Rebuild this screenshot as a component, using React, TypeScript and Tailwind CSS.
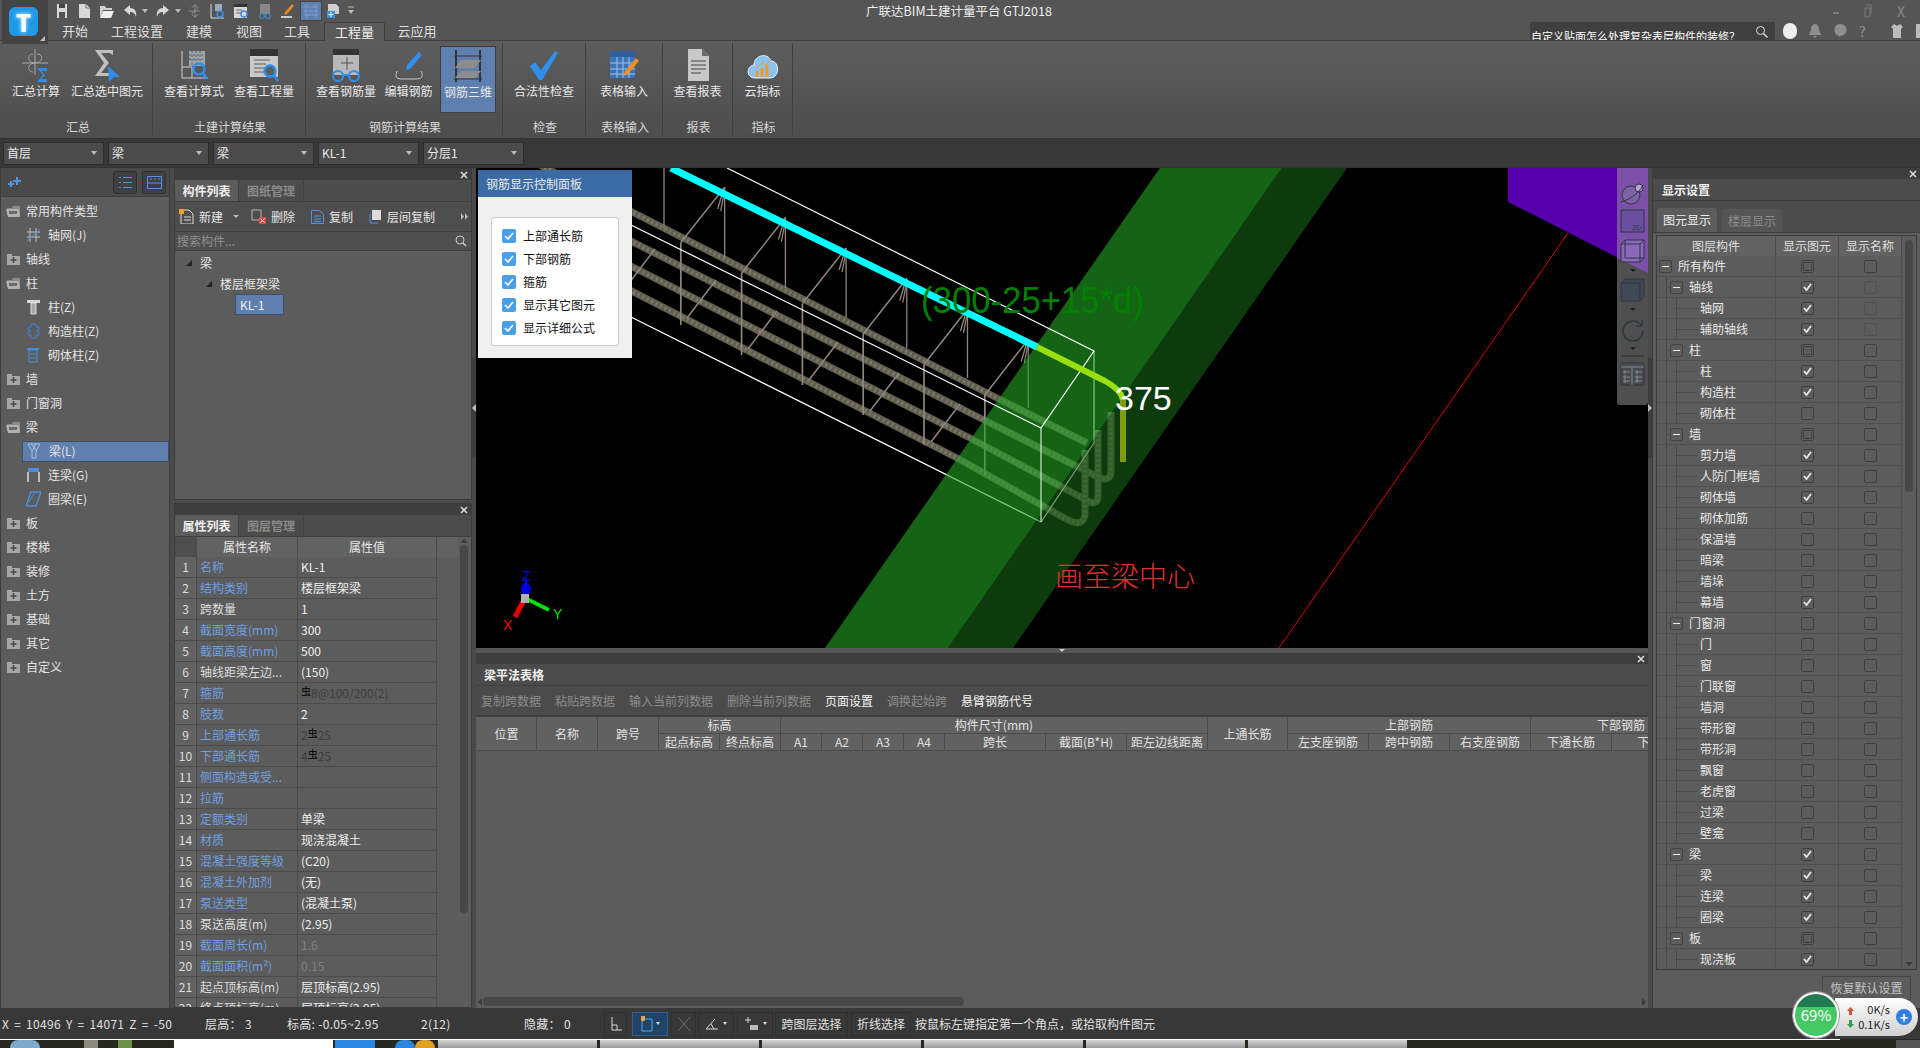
import type { ReactNode } from "react";

const FONT = "[font-family:'Noto_Sans_CJK_SC','Liberation_Sans',sans-serif]";

function Ico({ w = 16, h = 16, children }: { w?: number; h?: number; children: ReactNode }) {
    return (
        <svg width={w} height={h} viewBox={`0 0 ${w} ${h}`} fill="none" className="shrink-0">
            {children}
        </svg>
    );
}

// quick access bar ---------------------------------------------------------
const quickIcons: { w: number; active?: boolean; icon: ReactNode }[] = [
    { w: 24, icon: <Ico><path d="M3 1h10v14H3z" fill="#d8d8d8" /><path d="M5 1h6v4H5z" fill="#444" /><path d="M5 9h6v6H5z" fill="#555" /></Ico> },
    { w: 20, icon: <Ico><path d="M3 1h7l4 4v10H3z" fill="#d8d8d8" /><path d="M10 1v4h4" stroke="#777" /></Ico> },
    { w: 26, icon: <Ico><path d="M1 3h5l1 2h6v2H4l-3 8z" fill="#d0d0d0" /><path d="M4 8h11l-3 7H1z" fill="#efefef" /></Ico> },
    { w: 22, icon: <Ico><path d="M7 2L1 7l6 5V9c3 0 5 1 6 5 1-5-1-9-6-9z" fill="#d8d8d8" /></Ico> },
    { w: 6, icon: <Ico w={6} h={4}><path d="M0 0h6L3 4z" fill="#bbb" /></Ico> },
    { w: 28, icon: <Ico><path d="M9 2l6 5-6 5V9c-3 0-5 1-6 5-1-5 1-9 6-9z" fill="#d8d8d8" /></Ico> },
    { w: 4, icon: <Ico w={6} h={4}><path d="M0 0h6L3 4z" fill="#bbb" /></Ico> },
    { w: 30, icon: <Ico><path d="M8 1v14M2 8h11M5 5c0-3 6-3 6 0s-6 3-6 6 6 3 6 0" stroke="#8a8a8a" /></Ico> },
    { w: 16, icon: <Ico><path d="M1 1v14h13" stroke="#ddd" /><path d="M5 1h7v7H5z" fill="#9ab" /><circle cx="10" cy="11" r="3" stroke="#3b8fe8" strokeWidth="1.5" /></Ico> },
    { w: 30, icon: <Ico><path d="M1 1h13v14H1z" fill="#d8d8d8" /><path d="M1 1h13v3H1z" fill="#333" /><path d="M3 7h6M3 10h6" stroke="#666" /><circle cx="11" cy="11" r="3" stroke="#3b8fe8" strokeWidth="1.5" /></Ico> },
    { w: 18, icon: <Ico><path d="M3 1h10v10H3z" fill="#888" /><circle cx="5" cy="13" r="2.5" stroke="#3b8fe8" /><circle cx="11" cy="13" r="2.5" stroke="#3b8fe8" /></Ico> },
    { w: 26, icon: <Ico><path d="M13 1l2 2-7 8-3 1 1-3z" fill="#e8872a" /><path d="M2 14h11" stroke="#ccc" strokeWidth="2" /></Ico> },
    { w: 22, active: true, icon: <Ico><path d="M3 1v14M13 1v14M1 4h14M1 8h14M1 12h14" stroke="#7d9ccb" /><path d="M4 1l8 14M12 1L4 15" stroke="#7d9ccb" strokeWidth=".5" /></Ico> },
    { w: 22, icon: <Ico><path d="M3 1h8l3 3v7H3z" fill="#cfcfcf" /><path d="M2 8h8v7H2z" fill="#3b8fe8" /><path d="M6 9v5M3.5 11.5h5" stroke="#fff" /></Ico> },
    { w: 14, icon: <Ico w={8} h={10}><path d="M1 1h6" stroke="#bbb" /><path d="M1 4h6L4 8z" fill="#bbb" /></Ico> },
];

// ribbon -------------------------------------------------------------------
const BLUE = "#2f8fef";
const ribbonIcons: Record<string, ReactNode> = {
    sum: <Ico w={32} h={34}><path d="M15 1v26M2 15h26" stroke="#a8a8a8" /><path d="M15 15c-8 0-8-9-2-9M15 15c8 0 9-9 2-9M15 15c-8 0-8 9-2 9" stroke="#a8a8a8" /><path d="M17 20h10v3h-6l4 4-4 4h6v3H17l6-7z" fill={BLUE} /></Ico>,
    sumSel: <Ico w={32} h={34}><path d="M4 2h18v5l-3-2H10l8 10-8 10h9l3-2v5H4l9-13z" fill="#c0c0c0" /><path d="M17 18l12 11-6 0-5 5z" fill={BLUE} /></Ico>,
    formula: <Ico w={32} h={34}><path d="M4 3v27h26" stroke="#d0d0d0" /><path d="M4 19h10v11" stroke="#d0d0d0" /><path d="M11 3h16v15H11z" fill="#9aa3ae" /><path d="M14 3v15M18 3v15M22 3v15M11 7h16M11 11h16" stroke="#5c5c5c" strokeDasharray="2 2" /><circle cx="21" cy="21" r="5.5" stroke={BLUE} strokeWidth="2.4" /><path d="M25 25l4 6" stroke={BLUE} strokeWidth="2.6" /></Ico>,
    quantity: <Ico w={32} h={34}><path d="M2 1h28v28H2z" fill="#c9c9c9" /><path d="M2 1h28v7H2z" fill="#333" /><path d="M6 12h16M6 16h12M6 20h12M6 24h10" stroke="#5c5c5c" /><circle cx="22" cy="23" r="5.5" fill="#5c5c5c" stroke={BLUE} strokeWidth="2.4" /><path d="M26 27l4 6" stroke={BLUE} strokeWidth="2.6" /></Ico>,
    rebar: <Ico w={32} h={34}><path d="M3 1h26v26H3z" fill="#b8b8b8" /><path d="M3 1h26v6H3z" fill="#333" /><path d="M17 9v13M11 15h12" stroke="#555" /><circle cx="8" cy="28" r="5" stroke={BLUE} strokeWidth="2.2" /><circle cx="24" cy="28" r="5" stroke={BLUE} strokeWidth="2.2" /><path d="M13 27h6" stroke={BLUE} strokeWidth="2" /></Ico>,
    edit: <Ico w={32} h={34}><path d="M4 23c-3 7 1 8 5 8h14c5 0 8-2 5-8" stroke="#c8c8c8" /><path d="M26 4l3 3-12 14-4 1 1-5z" fill={BLUE} /></Ico>,
    rebar3d: <Ico w={32} h={34}><path d="M4 1v32M28 1v32" stroke="#343434" strokeWidth="2" /><path d="M2 7h28M2 30h28" stroke="#343434" /><path d="M9 11h20l-6 8H3z" fill="#8d8d8d" /><path d="M9 22h20l-6 7H3z" fill="#8d8d8d" /></Ico>,
    check: <Ico w={32} h={34}><path d="M2 18l5-4 6 8L27 3l3 2-16 27h-3z" fill={BLUE} /></Ico>,
    table: <Ico w={32} h={34}><path d="M2 3h25v27H2z" fill="#3d74b8" /><path d="M2 3h25v6H2z" fill="#2f5f9f" /><path d="M2 15h25M2 21h25M2 26h25M9 9v21M15 9v21M21 9v21" stroke="#9cc0ea" /><path d="M28 10l3 3-11 13-5 2 2-5z" fill="#ef8f25" /></Ico>,
    report: <Ico w={32} h={34}><path d="M6 1h14l7 7v25H6z" fill="#c8c8c8" /><path d="M20 1v7h7" fill="#6a6a6a" /><path d="M9 13h15M9 17h15M9 21h15M9 25h10" stroke="#444" /></Ico>,
    cloud: <Ico w={32} h={34}><path d="M8 30c-9 0-9-12-1-13 0-10 14-13 17-4 9 0 9 17-1 17z" fill="#8cc2ef" stroke="#e9f4fc" /><path d="M10 29v-6M15 29v-9M20 29v-12" stroke="#ef9a2b" strokeWidth="3" /><path d="M9 20l6-5 4 2 5-5" stroke="#ef9a2b" /></Ico>,
};

const ribbonGroups = [
    { label: "汇总", w: 153, pl: 0, lp: 4, justify: "justify-start", items: [{ t: "汇总计算", i: "sum", w: 72 }, { t: "汇总选中图元", i: "sumSel", w: 70 }] },
    { label: "土建计算结果", w: 153, pl: 7, lp: 2, justify: "justify-start", items: [{ t: "查看计算式", i: "formula", w: 68 }, { t: "查看工程量", i: "quantity", w: 72 }] },
    { label: "钢筋计算结果", w: 197, pl: 9, lp: 2, justify: "justify-start", items: [{ t: "查看钢筋量", i: "rebar", w: 62 }, { t: "编辑钢筋", i: "edit", w: 63 }, { t: "钢筋三维", i: "rebar3d", w: 56, active: true }] },
    { label: "检查", w: 83, pl: 0, lp: 2, justify: "justify-center", items: [{ t: "合法性检查", i: "check", w: 70 }] },
    { label: "表格输入", w: 77, pl: 0, lp: 2, justify: "justify-center", items: [{ t: "表格输入", i: "table", w: 60 }] },
    { label: "报表", w: 70, pl: 0, lp: 2, justify: "justify-center", items: [{ t: "查看报表", i: "report", w: 60 }] },
    { label: "指标", w: 60, pl: 0, lp: 2, justify: "justify-center", items: [{ t: "云指标", i: "cloud", w: 50 }] },
];

// left tree ------------------------------------------------------------------
function Folder({ open }: { open: boolean }) {
    return (
        <Ico w={15} h={13}>
            {open ? (
                <>
                    <path d="M1 3h5l1-2h7v9H1z" fill="#8a8a8a" />
                    <path d="M0 4h13l1 8H2z" fill="#b0b0b0" />
                    <path d="M3 6h8v3H3z" fill="#6c6c6c" />
                </>
            ) : (
                <>
                    <path d="M1 1h5v2h8v9H1z" fill="#a6a6a6" />
                    <path d="M7.5 4v6M4.5 7h6" stroke="#4a4a4a" strokeWidth="1.5" />
                </>
            )}
        </Ico>
    );
}

const treeIcon: Record<string, ReactNode> = {
    grid: <Ico w={15} h={16}><path d="M4 1v14M10 1v14M1 5h13M1 10h13" stroke="#bdbdbd" /><path d="M1 14L14 2" stroke="#4d94e8" /></Ico>,
    col: <Ico w={15} h={16}><path d="M1 1h13v3H1z" fill="#d5d5d5" /><path d="M5 4h5v11H5z" fill="#a8a8a8" stroke="#ddd" /></Ico>,
    ccol: <Ico w={15} h={16}><path d="M5 1h5v3h3v3h-2v2h2v3h-3v3H5v-3H2V9h2V7H2V4h3z" stroke="#3b82d6" /></Ico>,
    mcol: <Ico w={15} h={16}><path d="M1 1h12v2H1z" fill="#4d8ed8" /><path d="M3 3h8v12H3z" stroke="#4d8ed8" /><path d="M3 7h8M3 11h8" stroke="#4d8ed8" /></Ico>,
    beam: <Ico w={15} h={16}><path d="M1 1h12L9 8v7H5V8z" stroke="#a8c0e0" /><path d="M4 1l6 7M9 1L5 8" stroke="#a8c0e0" /></Ico>,
    lbeam: <Ico w={15} h={16}><path d="M2 1h11v4H2z" fill="#4d8ed8" /><path d="M2 5v10M13 5v10" stroke="#bdbdbd" strokeWidth="2" /></Ico>,
    rbeam: <Ico w={15} h={16}><path d="M5 1h10L10 15H0z" stroke="#4d8ed8" strokeWidth="1.5" /><path d="M3 11L9 1" stroke="#4d8ed8" /></Ico>,
};

const leftTree: { t: string; kind: "open" | "closed" | "leaf"; i?: string; sel?: boolean }[] = [
    { t: "常用构件类型", kind: "open" },
    { t: "轴网(J)", kind: "leaf", i: "grid" },
    { t: "轴线", kind: "closed" },
    { t: "柱", kind: "open" },
    { t: "柱(Z)", kind: "leaf", i: "col" },
    { t: "构造柱(Z)", kind: "leaf", i: "ccol" },
    { t: "砌体柱(Z)", kind: "leaf", i: "mcol" },
    { t: "墙", kind: "closed" },
    { t: "门窗洞", kind: "closed" },
    { t: "梁", kind: "open" },
    { t: "梁(L)", kind: "leaf", i: "beam", sel: true },
    { t: "连梁(G)", kind: "leaf", i: "lbeam" },
    { t: "圈梁(E)", kind: "leaf", i: "rbeam" },
    { t: "板", kind: "closed" },
    { t: "楼梯", kind: "closed" },
    { t: "装修", kind: "closed" },
    { t: "土方", kind: "closed" },
    { t: "基础", kind: "closed" },
    { t: "其它", kind: "closed" },
    { t: "自定义", kind: "closed" },
];

// property table ---------------------------------------------------------------
const props: { n: string; v: string; link?: boolean; tone?: "dark" | "dim" }[] = [
    { n: "名称", v: "KL-1", link: true },
    { n: "结构类别", v: "楼层框架梁", link: true },
    { n: "跨数量", v: "1" },
    { n: "截面宽度(mm)", v: "300", link: true },
    { n: "截面高度(mm)", v: "500", link: true },
    { n: "轴线距梁左边...", v: "(150)" },
    { n: "箍筋", v: "虫8@100/200(2)", link: true, tone: "dark" },
    { n: "肢数", v: "2", link: true },
    { n: "上部通长筋", v: "2虫25", link: true, tone: "dark" },
    { n: "下部通长筋", v: "4虫25", link: true, tone: "dark" },
    { n: "侧面构造或受...", v: "", link: true },
    { n: "拉筋", v: "", link: true },
    { n: "定额类别", v: "单梁", link: true },
    { n: "材质", v: "现浇混凝土", link: true },
    { n: "混凝土强度等级", v: "(C20)", link: true },
    { n: "混凝土外加剂", v: "(无)", link: true },
    { n: "泵送类型", v: "(混凝土泵)", link: true },
    { n: "泵送高度(m)", v: "(2.95)" },
    { n: "截面周长(m)", v: "1.6", link: true, tone: "dim" },
    { n: "截面面积(m²)", v: "0.15", link: true, tone: "dim" },
    { n: "起点顶标高(m)", v: "层顶标高(2.95)" },
    { n: "终点顶标高(m)", v: "层顶标高(2.95)" },
];

function RebarValue({ v, tone }: { v: string; tone?: "dark" | "dim" }) {
    const cls = tone === "dark" ? "text-[#3e3e3e]" : tone === "dim" ? "text-[#808080]" : "text-[#eeeeee]";
    const parts = v.split("虫");
    return (
        <span className={`whitespace-nowrap ${cls}`}>
            {parts.map((p, i) => (
                <span key={i}>
                    {i > 0 && <span className="relative top-[-3px] text-[10px] text-black">虫</span>}
                    {p}
                </span>
            ))}
        </span>
    );
}

// display settings --------------------------------------------------------------
type Mark = "on" | "off" | "part" | "dim";
const layers: { t: string; d: number; a: Mark; b?: Mark }[] = [
    { t: "所有构件", d: 0, a: "part" },
    { t: "轴线", d: 1, a: "on", b: "dim" },
    { t: "轴网", d: 2, a: "on", b: "dim" },
    { t: "辅助轴线", d: 2, a: "on", b: "dim" },
    { t: "柱", d: 1, a: "part" },
    { t: "柱", d: 2, a: "on" },
    { t: "构造柱", d: 2, a: "on" },
    { t: "砌体柱", d: 2, a: "off" },
    { t: "墙", d: 1, a: "part" },
    { t: "剪力墙", d: 2, a: "on" },
    { t: "人防门框墙", d: 2, a: "on" },
    { t: "砌体墙", d: 2, a: "on" },
    { t: "砌体加筋", d: 2, a: "off" },
    { t: "保温墙", d: 2, a: "off" },
    { t: "暗梁", d: 2, a: "off" },
    { t: "墙垛", d: 2, a: "off" },
    { t: "幕墙", d: 2, a: "on" },
    { t: "门窗洞", d: 1, a: "off" },
    { t: "门", d: 2, a: "off" },
    { t: "窗", d: 2, a: "off" },
    { t: "门联窗", d: 2, a: "off" },
    { t: "墙洞", d: 2, a: "off" },
    { t: "带形窗", d: 2, a: "off" },
    { t: "带形洞", d: 2, a: "off" },
    { t: "飘窗", d: 2, a: "off" },
    { t: "老虎窗", d: 2, a: "off" },
    { t: "过梁", d: 2, a: "off" },
    { t: "壁龛", d: 2, a: "off" },
    { t: "梁", d: 1, a: "on" },
    { t: "梁", d: 2, a: "on" },
    { t: "连梁", d: 2, a: "on" },
    { t: "圈梁", d: 2, a: "on" },
    { t: "板", d: 1, a: "part" },
    { t: "现浇板", d: 2, a: "on" },
];

function MarkBox({ m }: { m: Mark }) {
    const border = m === "dim" ? "border-[#505050]" : "border-[#3f3f3f]";
    return (
        <span className={`flex h-[13px] w-[13px] items-center justify-center rounded-[2px] border ${border}`}>
            {m === "on" && (
                <svg width="9" height="8" viewBox="0 0 9 8" fill="none">
                    <path d="M1 4l2.5 3L8 1" stroke="#e4e4e4" strokeWidth="1.8" />
                </svg>
            )}
            {m === "part" && <span className="h-[9px] w-[9px] rounded-[1px] border border-[#3f3f3f]" />}
        </span>
    );
}

function Expander() {
    return (
        <span className="flex h-[13px] w-[13px] shrink-0 items-center justify-center rounded-[2px] border border-[#434343]">
            <span className="h-px w-[7px] bg-[#efefef]" />
        </span>
    );
}

// scene -------------------------------------------------------------------------
function Scene() {
    const ids = [0, 1, 2, 3, 4, 5, 6];
    return (
        <svg className="block h-[480px] w-[1172px]" viewBox="476 168 1172 480" fill="none">
            {/* rebar */}
            {[
                "M540 165L997 398L1087 443",
                "M540 195L984 420L1100 478Q1111 482 1111 470L1111 412",
                "M540 220L970 438L1090 502Q1098 505 1098 495L1098 430",
                "M540 244L957 458L1068 520Q1085 528 1085 512L1085 450",
            ].map((d) => (
                <g key={d}>
                    <path d={d} stroke="#625e4e" strokeWidth="7" />
                    <path d={d} stroke="#7c796c" strokeWidth="4" strokeDasharray="2 3" />
                </g>
            ))}
            {/* stirrups */}
            {ids.map((i) => {
                const x = 664 + 60.7 * i;
                const top = i === 0 ? 168 : 187 + 30.5 * (i - 1);
                const bottom = 228 + 30 * i;
                const lx = 620 + 60.8 * i;
                const ly = 212 + 30.5 * i;
                return (
                    <g key={i} stroke="#93857f" strokeWidth="1.3">
                        <path d={`M${x} ${top}V${bottom}`} />
                        {i > 0 && <path d={`M${lx} ${ly}V${295 + 30 * i}`} strokeWidth="1.7" />}
                        {i > 0 && <path d={`M${x} ${top}L${lx} ${ly}`} strokeWidth="1.5" />}
                        {i > 0 && <path d={`M${x - 2} ${top + 5}L${x - 7} ${top + 22}M${x} ${top + 3}L${x - 4} ${top + 24}`} />}
                        {i < 6 && <path d={`M${655 + 61 * i} ${249 + 31 * i}L${626 + 61 * i} ${287 + 31 * i}`} strokeWidth="1.5" />}
                    </g>
                );
            })}
            {/* box, back lines */}
            <path d="M631 317L1041 522M1094 351V443M1041 522L1094 443" stroke="#ffffff" strokeWidth="1.2" />
            {/* slab band */}
            <polygon points="1160,168 1282,168 948,648 825,648" fill="#23a523" fillOpacity=".6" />
            <polygon points="1282,168 1347,168 1013,648 948,648" fill="#166216" fillOpacity=".6" />
            <polygon points="1508,168 1648,168 1648,273 1508,202" fill="#5500aa" />
            <path d="M1568 233L1279 648" stroke="#e00000" strokeWidth="1" />
            {/* box, front lines */}
            <path d="M727 168L1094 351L1041 428L631 225" stroke="#ffffff" strokeWidth="1.2" />
            <path d="M1041 428V522" stroke="#c8e8c8" strokeWidth="1.2" />
            {/* top bar */}
            <path d="M671 168L1037 347" stroke="#00ffff" strokeWidth="7" />
            <path d="M1037 347L1105 381Q1123 391 1123 402" stroke="#9ae010" strokeWidth="6" />
            <path d="M1123 400V462" stroke="#7f9c10" strokeWidth="6" />
            <text x="921" y="313" fontSize="36" fill="#008000" fontFamily="Liberation Sans" textLength="223" lengthAdjust="spacingAndGlyphs">(300-25+15*d)</text>
            <text x="1115" y="410" fontSize="34" fill="#ffffff" fontFamily="Liberation Sans">375</text>
            <text x="1055" y="587" fontSize="28" fill="#e03030" fontFamily="Noto Sans CJK SC" fontWeight="300">画至梁中心</text>
            {/* axis */}
            <path d="M526 578V596" stroke="#0000e0" strokeWidth="2" />
            <ellipse cx="526" cy="589" rx="5" ry="6" fill="#0000e0" />
            <path d="M525 598L515 617" stroke="#f00000" strokeWidth="5" />
            <path d="M525 598L549 610" stroke="#00e000" strokeWidth="4" />
            <rect x="521" y="594" width="8" height="9" fill="#b0b0b0" />
            <text x="522" y="581" fontSize="14" fill="#0000e0" fontFamily="Liberation Sans">Z</text>
            <text x="503" y="630" fontSize="14" fill="#f00000" fontFamily="Liberation Sans">X</text>
            <text x="553" y="619" fontSize="14" fill="#00e000" fontFamily="Liberation Sans">Y</text>
        </svg>
    );
}

function ViewTools() {
    const stroke = "#2f3540";
    return (
        <svg className="absolute right-0 top-0 rounded-b-[3px]" width="31" height="237" viewBox="0 0 31 237" fill="none">
            <rect width="31" height="237" fill="#4f4f4f" />
            <polygon points="0,0 31,0 31,105 0,90" fill="#7a50a8" />
            <circle cx="14" cy="27" r="9" fill="#7d63a8" stroke={stroke} />
            <circle cx="22" cy="20" r="4" fill="#b7a3d2" stroke={stroke} />
            <path d="M3 34C10 33 22 26 26 17" stroke={stroke} />
            <rect x="4" y="42" width="23" height="22" fill="#6a4ea0" stroke={stroke} />
            <text x="15" y="62" fontSize="7" fill="#2f3540" fontFamily="Liberation Sans">2D</text>
            <path d="M4 76l4-4h19v18l-4 4H4zM4 76h19v18M23 76l4-4" stroke={stroke} fill="#9a7fd0" fillOpacity=".5" />
            <path d="M8 72v18h19" stroke={stroke} />
            <path d="M13 101h6l-3 3z" fill="#222" />
            <path d="M4 115l4-4h19v18l-4 4H4z" fill="#404854" stroke={stroke} />
            <path d="M4 115h19v18M23 115l4-4" stroke={stroke} />
            <path d="M13 140h6l-3 3z" fill="#222" />
            <path d="M24 157a10 10 0 1 0 2 6" stroke={stroke} strokeWidth="1.6" />
            <path d="M19 158l6 0 0-6" stroke={stroke} strokeWidth="1.4" />
            <path d="M13 179h6l-3 3z" fill="#222" />
            <path d="M5 188h22" stroke="#2b2b2b" />
            <rect x="4" y="195" width="23" height="22" rx="1" fill="#484c52" stroke={stroke} />
            <path d="M4 199h23M15 199v18M7 203h2v2H7zM7 208h2v2H7zM7 212h2v2H7zM19 203h2v2h-2zM19 208h2v2h-2zM19 212h2v2h-2zM10 204h3M10 209h3M10 213h3M22 204h3M22 209h3M22 213h3" stroke="#9aa0a8" strokeWidth=".7" />
        </svg>
    );
}

// table columns, x from 477
const tableCols =
    "grid-cols-[60px_61px_61px_61px_61px_41px_41px_41px_41px_101px_81px_81px_80px_81px_81px_81px_81px_100px]";

function HeadCell({ t, cls = "" }: { t: string; cls?: string }) {
    return (
        <div className={`flex items-center justify-center overflow-hidden whitespace-nowrap border-b border-r border-[#4b4b4b] bg-[#616161] text-[#e2e2e2] ${cls}`}>
            {t}
        </div>
    );
}

function Tab({ t, w, active }: { t: string; w: number; active?: boolean }) {
    return (
        <div
            style={{ width: w }}
            className={`flex h-full items-center justify-center border-r border-[#3f3f3f] font-bold ${active ? "bg-[#5c5c5c] text-[#eeeeee]" : "text-[#8a8a8a]"}`}
        >
            {t}
        </div>
    );
}

function CloseX() {
    return (
        <svg width="8" height="8" viewBox="0 0 8 8" fill="none">
            <path d="M1 1l6 6M7 1L1 7" stroke="#dddddd" strokeWidth="1.5" />
        </svg>
    );
}

function Strip() {
    return (
        <div className="flex h-[11px] shrink-0 items-center justify-end bg-[#3e3e3e] pr-[3px]">
            <CloseX />
        </div>
    );
}

// splitter handle in the gutter between panels
function Grip({ cls, right }: { cls: string; right?: boolean }) {
    return (
        <div className={`absolute top-[358px] flex h-[100px] w-[4px] items-center justify-center bg-[#3c3c3c] ${cls}`}>
            <span className={`h-0 w-0 border-y-[4px] border-y-transparent ${right ? "border-l-[4px] border-l-[#bbbbbb]" : "border-r-[4px] border-r-[#bbbbbb]"}`} />
        </div>
    );
}

const ribbonTabs = [
    { t: "开始", w: 58 },
    { t: "工程设置", w: 66 },
    { t: "建模", w: 58 },
    { t: "视图", w: 42 },
    { t: "工具", w: 54 },
];

export default function App() {
    return (
        <div className={`relative flex h-[1048px] w-[1920px] flex-col overflow-hidden bg-[#4a4a4a] text-[12px] leading-[16px] text-[#e6e6e6] ${FONT}`}>
            {/* title + tabs */}
            <div className="flex h-[41px] shrink-0 border-b border-[#3e3e3e] bg-[#555555]">
                <div className="relative z-10 ml-[2px] -mr-[2px] h-[44px] w-[46px] shrink-0 bg-[#444444] pl-[7px] pt-[7px]">
                    <div className="flex h-[29px] w-[29px] items-center justify-center rounded-[6px] bg-[#1f9ae8] text-[24px] font-black leading-none text-white [text-shadow:0_0_4px_#bfeaff]">T</div>
                    <span className="absolute bottom-[3px] right-[3px] h-0 w-0 border-b-[5px] border-l-[5px] border-b-[#bbbbbb] border-l-transparent" />
                </div>
                <div className="flex min-w-0 flex-1 flex-col">
                    <div className="flex h-[22px] items-center pl-[4px]">
                        {quickIcons.map((q, i) => (
                            <div key={i} style={{ width: q.w }} className={`flex h-[20px] shrink-0 items-center justify-center ${q.active ? "border border-[#444444] bg-[#5f7fae]" : ""}`}>
                                {q.icon}
                            </div>
                        ))}
                        <span className="ml-[508px] whitespace-nowrap text-[12.5px] text-[#eeeeee]">广联达BIM土建计量平台 GTJ2018</span>
                        <div className="ml-auto flex items-center gap-[25px] pr-[15px]">
                            <span className="mt-[4px] h-[2px] w-[6px] bg-[#7b7b7b]" />
                            <svg width="8" height="14" viewBox="0 0 8 14" fill="none"><path d="M2 1h5v9M1 4h5v9H1z" stroke="#7b7b7b" /></svg>
                            <span className="text-[14px] leading-none text-[#8a8a8a]">X</span>
                        </div>
                    </div>
                    <div className="flex h-[18px] items-stretch">
                        {ribbonTabs.map((t) => (
                            <div key={t.t} style={{ width: t.w }} className="flex shrink-0 items-center justify-center text-[13px] text-[#dedede]">{t.t}</div>
                        ))}
                        <div className="flex h-[19px] w-[61px] shrink-0 items-center justify-center rounded-t-[2px] border border-b-0 border-[#3e3e3e] bg-[#5a5a5a] text-[13px] text-[#f0f0f0]">工程量</div>
                        <div className="flex w-[64px] shrink-0 items-center justify-center text-[13px] text-[#dedede]">云应用</div>
                        <div className="ml-[1081px] flex h-[18px] w-[245px] shrink-0 items-center overflow-hidden bg-[#404040] pl-[1px] text-[11px] text-white">
                            <span className="flex-1 whitespace-nowrap pt-[10px]">自定义贴面怎么处理复杂表层构件的装修？</span>
                            <svg className="mr-[7px]" width="13" height="13" viewBox="0 0 13 13" fill="none"><circle cx="5.5" cy="5.5" r="4" stroke="#dddddd" /><path d="M8.5 8.5l4 4" stroke="#dddddd" strokeWidth="1.5" /></svg>
                        </div>
                        <div className="ml-[8px] flex items-center gap-[12px]">
                            <span className="h-[16px] w-[14px] rounded-full bg-[#eeeeee]" />
                            <svg width="12" height="14" viewBox="0 0 12 14" fill="#8f8f8f"><path d="M6 0c3 0 4 3 4 6l2 5H0l2-5c0-3 1-6 4-6zM4 12h4l-2 2z" /></svg>
                            <svg width="14" height="14" viewBox="0 0 14 14" fill="#8f8f8f"><path d="M7 0a6.5 6 0 1 1-2 11.7L7 14l-1-2.2A6 6 0 0 1 7 0z" /></svg>
                            <span className="w-[19px] text-[14px] leading-none text-[#8f8f8f]">?</span>
                            <svg width="14" height="14" viewBox="0 0 14 14" fill="#bcbcbc"><path d="M4 0l3 2 3-2 3 3-2 2v9H3V5L1 3z" /></svg>
                            <svg width="13" height="14" viewBox="0 0 13 14" fill="#bcbcbc"><path d="M0 0h13v14H0z" /><path d="M6.5 4l3 4H8v3H5V8H3.5z" fill="#444444" /></svg>
                        </div>
                    </div>
                </div>
            </div>

            {/* ribbon */}
            <div className="flex h-[97px] shrink-0 bg-gradient-to-b from-[#5d5d5d] to-[#4d4d4d]">
                {ribbonGroups.map((g) => (
                    <div key={g.label} style={{ width: g.w }} className="my-[2px] flex shrink-0 flex-col border-r border-[#404040]">
                        <div style={{ paddingLeft: g.pl }} className={`flex h-[71px] items-start pt-[3px] ${g.justify}`}>
                            {g.items.map((b) => (
                                <div
                                    key={b.t}
                                    style={{ width: b.w }}
                                    className={`flex h-[67px] shrink-0 flex-col items-center whitespace-nowrap ${"active" in b && b.active ? "border border-[#3e3e3e] bg-[#5f7fae]" : ""}`}
                                >
                                    <div className="flex h-[37px] items-center">{ribbonIcons[b.i]}</div>
                                    <span className="text-[#e8e8e8]">{b.t}</span>
                                </div>
                            ))}
                        </div>
                        <div style={{ paddingLeft: g.lp }} className="flex flex-1 items-start justify-center pt-[5px] text-[#d8d8d8]">{g.label}</div>
                    </div>
                ))}
            </div>

            {/* dropdowns */}
            <div className="flex h-[30px] shrink-0 items-center gap-[4px] border-y border-[#333333] bg-[#383838] pl-[3px]">
                {["首层", "梁", "梁", "KL-1", "分层1"].map((t, i) => (
                    <div key={i} className="flex h-[23px] w-[101px] items-center justify-between border border-[#2d2d2d] bg-[#4b4b4b] pl-[3px] pr-[6px] text-[#e8e8e8]">
                        <span>{t}</span>
                        <span className="h-0 w-0 border-x-[3px] border-t-[4px] border-x-transparent border-t-[#bbbbbb]" />
                    </div>
                ))}
            </div>

            {/* main */}
            <div className="relative flex h-[840px] shrink-0">
                {/* type tree */}
                <div className="flex w-[170px] shrink-0 flex-col border-x border-[#3c3c3c] bg-[#5c5c5c]">
                    <div className="flex h-[29px] shrink-0 items-center justify-between border-b border-[#3f3f3f] bg-[#4a4a4a] pl-[6px] pr-[3px]">
                        <svg width="14" height="12" viewBox="0 0 14 12" fill="#4d94e8"><path d="M9 1h2v3h3v2h-3v3H9V6H6V4h3zM1 7h2V5h2v2h2v2H5v2H3V9H1z" /></svg>
                        <div className="flex gap-[5px]">
                            <div className="flex h-[23px] w-[24px] items-center justify-center rounded-[3px] border border-[#2f2f2f] bg-[#404040]">
                                <svg width="13" height="13" viewBox="0 0 13 13" fill="none" stroke="#4d94e8"><path d="M0 1.5h2M4 1.5h9M0 6.5h2M4 6.5h9M0 11.5h2M4 11.5h9" /></svg>
                            </div>
                            <div className="flex h-[23px] w-[24px] items-center justify-center rounded-[3px] border border-[#2f2f2f] bg-[#404040]">
                                <svg width="15" height="13" viewBox="0 0 15 13" fill="none" stroke="#4d94e8"><path d="M.5.5h14v12H.5zM.5 7h14M3 3h2M7 3h2M11 3h2" /></svg>
                            </div>
                        </div>
                    </div>
                    <div className="flex flex-col pt-[2px]">
                        {leftTree.map((r, i) => (
                            <div key={i} className="flex h-[24px] items-center">
                                {r.kind === "leaf" ? (
                                    <div className={`ml-[21px] flex h-[21px] flex-1 items-center pl-[4px] ${r.sel ? "border border-[#3e4f6a] bg-[#5f7fae]" : ""}`}>
                                        <span className="w-[22px] shrink-0">{treeIcon[r.i as string]}</span>
                                        <span className="whitespace-nowrap text-[#e4e4e4]">{r.t}</span>
                                    </div>
                                ) : (
                                    <div className="flex items-center pl-[5px]">
                                        <span className="w-[20px] shrink-0"><Folder open={r.kind === "open"} /></span>
                                        <span className="whitespace-nowrap text-[#e4e4e4]">{r.t}</span>
                                    </div>
                                )}
                            </div>
                        ))}
                    </div>
                </div>

                {/* component + properties */}
                <div className="ml-[4px] flex w-[298px] shrink-0 flex-col gap-[3px]">
                    <div className="flex h-[332px] shrink-0 flex-col border border-[#3c3c3c] bg-[#5c5c5c]">
                        <Strip />
                        <div className="flex h-[22px] shrink-0 border-b border-[#3f3f3f] bg-[#4c4c4c]">
                            <Tab t="构件列表" w={64} active />
                            <Tab t="图纸管理" w={65} />
                        </div>
                        <div className="flex h-[30px] shrink-0 items-center whitespace-nowrap border-b border-[#3f3f3f] bg-[#4e4e4e] pl-[4px]">
                            <svg className="shrink-0" width="15" height="15" viewBox="0 0 15 15" fill="none"><path d="M2 1h8l4 4v10H2z" stroke="#dddddd" /><path d="M5 8h7M5 11h7" stroke="#dddddd" /><rect width="5" height="5" fill="#f0a030" /></svg>
                            <span className="ml-[5px]">新建</span>
                            <span className="ml-[10px] h-0 w-0 border-x-[3px] border-t-[3px] border-x-transparent border-t-[#bbbbbb]" />
                            <svg className="ml-[12px] shrink-0" width="15" height="15" viewBox="0 0 15 15" fill="none"><path d="M1 1h9v10H1z" stroke="#b5b5b5" /><rect x="8" y="8" width="7" height="7" fill="#e04848" /><path d="M9.5 9.5l4 4M13.5 9.5l-4 4" stroke="#fff" /></svg>
                            <span className="ml-[5px]">删除</span>
                            <svg className="ml-[16px] shrink-0" width="13" height="15" viewBox="0 0 13 15" fill="none" stroke="#4d94e8"><path d="M.5 1.5h8l4 4v9H.5zM3 7h7M3 10h7M3 12.5h7" /></svg>
                            <span className="ml-[5px]">复制</span>
                            <svg className="ml-[16px] shrink-0" width="13" height="15" viewBox="0 0 13 15" fill="none"><path d="M1 5v9h8" stroke="#4d94e8" /><rect x="3" y="1" width="9" height="10" fill="#dddddd" /></svg>
                            <span className="ml-[5px]">层间复制</span>
                            <svg className="ml-[26px] shrink-0" width="8" height="7" viewBox="0 0 8 7" fill="#bbbbbb"><path d="M0 0l3 3.5L0 7zM4 0l3 3.5L4 7z" /></svg>
                        </div>
                        <div className="flex h-[19px] shrink-0 items-center justify-between border-b border-[#3f3f3f] bg-[#505050] pl-[2px] pr-[4px] text-[#8e8e8e]">
                            <span>搜索构件...</span>
                            <svg width="12" height="12" viewBox="0 0 12 12" fill="none"><circle cx="5" cy="5" r="4" stroke="#cccccc" /><path d="M8 8l3 3" stroke="#cccccc" strokeWidth="1.5" /></svg>
                        </div>
                        <div className="flex flex-col pt-[1px]">
                            <div className="flex h-[21px] items-center pl-[11px]">
                                <span className="h-0 w-0 border-b-[6px] border-l-[6px] border-b-[#222222] border-l-transparent" />
                                <span className="ml-[8px]">梁</span>
                            </div>
                            <div className="flex h-[21px] items-center pl-[31px]">
                                <span className="h-0 w-0 border-b-[6px] border-l-[6px] border-b-[#222222] border-l-transparent" />
                                <span className="ml-[8px]">楼层框架梁</span>
                            </div>
                            <div className="ml-[60px] flex h-[21px] w-[49px] items-center border border-[#3e4f6a] bg-[#5f7fae] pl-[4px] text-[#f0f0f0]">KL-1</div>
                        </div>
                    </div>

                    <div className="flex min-h-0 flex-1 flex-col overflow-hidden border border-[#3c3c3c] bg-[#5c5c5c]">
                        <Strip />
                        <div className="flex h-[22px] shrink-0 border-b border-[#3f3f3f] bg-[#4c4c4c]">
                            <Tab t="属性列表" w={64} active />
                            <Tab t="图层管理" w={65} />
                        </div>
                        <div className="relative min-h-0 flex-1">
                            <div className="flex h-[20px] text-[#e6e6e6]">
                                <div className="w-[22px] shrink-0 border-r border-[#4b4b4b] bg-[#4e4e4e]" />
                                <div className="flex w-[101px] shrink-0 items-center justify-center border-r border-[#4b4b4b] bg-[#626262]">属性名称</div>
                                <div className="flex w-[139px] shrink-0 items-center justify-center border-r border-[#4b4b4b] bg-[#626262]">属性值</div>
                                <div className="w-[21px] shrink-0 bg-[#626262]" />
                            </div>
                            {props.map((p, i) => (
                                <div key={i} className="flex h-[21px] w-[262px] border-b border-[#4b4b4b]">
                                    <div className="flex w-[22px] shrink-0 items-center justify-center border-r border-[#4b4b4b] bg-[#626262] text-[#dddddd]">{i + 1}</div>
                                    <div className={`flex w-[101px] shrink-0 items-center whitespace-nowrap border-r border-[#4b4b4b] pl-[3px] ${p.link ? "text-[#6f9fe0]" : "text-[#dddddd]"}`}>{p.n}</div>
                                    <div className="flex w-[139px] shrink-0 items-center border-r border-[#4b4b4b] pl-[3px]">
                                        <RebarValue v={p.v} tone={p.tone} />
                                    </div>
                                </div>
                            ))}
                            {/* scrollbar */}
                            <div className="absolute right-[3px] top-0 flex h-full w-[8px] flex-col items-center bg-[#5c5c5c]">
                                <span className="mt-[2px] h-0 w-0 border-x-[4px] border-b-[4px] border-x-transparent border-b-[#3c3c3c]" />
                                <span className="mt-[2px] h-[368px] w-[8px] rounded-[4px] bg-[#474747]" />
                            </div>
                        </div>
                    </div>
                </div>

                {/* canvas + beam table */}
                <div className="ml-[4px] flex w-[1172px] min-w-0 shrink-0 flex-col">
                    <div className="relative h-[480px] shrink-0 bg-black">
                        <Scene />
                        <ViewTools />
                        {/* rebar control panel */}
                        <div className="absolute left-[2px] top-[2px] flex h-[188px] w-[154px] flex-col bg-[#f0f0f0]">
                            <div className="flex h-[27px] shrink-0 items-center bg-[#3a6ba5] pl-[8px] text-[#e8e8e8]">钢筋显示控制面板</div>
                            <div className="mx-[13px] mt-[20px] flex h-[129px] flex-col justify-center gap-[7px] rounded-[3px] border border-[#cccccc] bg-white pl-[10px]">
                                {["上部通长筋", "下部钢筋", "箍筋", "显示其它图元", "显示详细公式"].map((t) => (
                                    <div key={t} className="flex h-[16px] items-center text-[#111111]">
                                        <span className="flex h-[14px] w-[14px] items-center justify-center rounded-[2px] bg-[#4a9fe8]">
                                            <svg width="10" height="8" viewBox="0 0 10 8" fill="none"><path d="M1 4l3 3 5-6" stroke="#ffffff" strokeWidth="1.6" /></svg>
                                        </span>
                                        <span className="ml-[7px]">{t}</span>
                                    </div>
                                ))}
                            </div>
                        </div>
                    </div>
                    <div className="flex h-[5px] shrink-0 items-center justify-center bg-[#555555]">
                        <span className="h-0 w-0 border-x-[3px] border-t-[3px] border-x-transparent border-t-[#cccccc]" />
                    </div>
                    <div className="flex min-h-0 flex-1 flex-col overflow-hidden bg-[#5c5c5c]">
                        <Strip />
                        <div className="flex h-[22px] shrink-0 items-center border-b border-[#3f3f3f] bg-[#4b4b4b] pl-[8px] font-bold text-[#f0f0f0]">梁平法表格</div>
                        <div className="flex h-[31px] shrink-0 items-center gap-[14px] border-b-2 border-[#3f3f3f] bg-[#4b4b4b] pl-[5px] text-[#8c8c8c]">
                            <span>复制跨数据</span>
                            <span>粘贴跨数据</span>
                            <span>输入当前列数据</span>
                            <span>删除当前列数据</span>
                            <span className="text-[#f2f2f2]">页面设置</span>
                            <span>调换起始跨</span>
                            <span className="text-[#f2f2f2]">悬臂钢筋代号</span>
                        </div>
                        <div className="relative min-h-0 flex-1 overflow-hidden">
                            <div className={`ml-px grid h-[34px] w-[1275px] ${tableCols} grid-rows-[17px_17px] leading-[14px]`}>
                                <HeadCell t="位置" cls="row-span-2" />
                                <HeadCell t="名称" cls="row-span-2" />
                                <HeadCell t="跨号" cls="row-span-2" />
                                <HeadCell t="标高" cls="col-span-2" />
                                <HeadCell t="构件尺寸(mm)" cls="col-span-7" />
                                <HeadCell t="上通长筋" cls="row-span-2" />
                                <HeadCell t="上部钢筋" cls="col-span-3" />
                                <HeadCell t="下部钢筋" cls="col-span-2" />
                                {["起点标高", "终点标高", "A1", "A2", "A3", "A4", "跨长", "截面(B*H)", "距左边线距离", "左支座钢筋", "跨中钢筋", "右支座钢筋", "下通长筋", "下部钢筋"].map((t) => (
                                    <HeadCell key={t} t={t} />
                                ))}
                            </div>
                            <span className="absolute bottom-[2px] left-[2px] h-0 w-0 border-y-[4px] border-r-[4px] border-y-transparent border-r-[#3c3c3c]" />
                            <div className="absolute bottom-[2px] left-[7px] h-[9px] w-[481px] rounded-[4px] bg-[#474747]" />
                            <span className="absolute bottom-[2px] right-[2px] h-0 w-0 border-y-[4px] border-l-[4px] border-y-transparent border-l-[#3c3c3c]" />
                        </div>
                    </div>
                </div>

                {/* display settings */}
                <div className="ml-[4px] flex min-w-0 flex-1 flex-col border-l border-[#3c3c3c] bg-[#5c5c5c]">
                    <Strip />
                    <div className="flex h-[22px] shrink-0 items-center border-b border-[#3f3f3f] bg-[#4c4c4c] pl-[9px] font-bold text-[#f0f0f0]">显示设置</div>
                    <div className="flex h-[32px] shrink-0 items-end gap-[5px] border-b border-[#3f3f3f] bg-[#4c4c4c] pl-[4px]">
                        <div className="flex h-[24px] w-[60px] items-center justify-center rounded-t-[3px] bg-[#5c5c5c] text-[#eeeeee]">图元显示</div>
                        <div className="flex h-[23px] w-[60px] items-center justify-center rounded-t-[3px] bg-[#555555] text-[#8c8c8c]">楼层显示</div>
                    </div>
                    <div className="relative mx-[3px] mt-[2px] h-[735px] shrink-0 overflow-hidden border border-[#3c3c3c]">
                        <div className="flex h-[20px] w-[245px] bg-[#626262] text-[#dddddd]">
                            <div className="flex w-[119px] items-center justify-center border-r border-[#4b4b4b]">图层构件</div>
                            <div className="flex w-[63px] items-center justify-center border-r border-[#4b4b4b]">显示图元</div>
                            <div className="flex w-[63px] items-center justify-center border-r border-[#4b4b4b]">显示名称</div>
                        </div>
                        {layers.map((l, i) => (
                            <div key={i} className="flex h-[21px] w-[245px] border-b border-[#505050]">
                                <div className="flex w-[119px] shrink-0 items-stretch border-r border-[#4f4f4f] text-[#e8e8e8]">
                                    {l.d === 0 && (
                                        <div className="flex items-center pl-[2px]">
                                            <Expander />
                                            <span className="ml-[6px]">{l.t}</span>
                                        </div>
                                    )}
                                    {l.d === 1 && (
                                        <div className="ml-[9px] flex items-center border-l border-[#4a4a4a]">
                                            <span className="h-px w-[3px] bg-[#4a4a4a]" />
                                            <Expander />
                                            <span className="ml-[6px]">{l.t}</span>
                                        </div>
                                    )}
                                    {l.d === 2 && (
                                        <div className="ml-[9px] flex border-l border-[#4a4a4a]">
                                            <div className="ml-[9px] flex items-center border-l border-[#4a4a4a]">
                                                <span className="h-px w-[20px] bg-[#4a4a4a]" />
                                                <span className="ml-[3px] whitespace-nowrap">{l.t}</span>
                                            </div>
                                        </div>
                                    )}
                                </div>
                                <div className="flex w-[63px] shrink-0 items-center justify-center border-r border-[#4f4f4f]"><MarkBox m={l.a} /></div>
                                <div className="flex w-[63px] shrink-0 items-center justify-center border-r border-[#4f4f4f]"><MarkBox m={l.b ?? "off"} /></div>
                            </div>
                        ))}
                        <div className="absolute right-[3px] top-[4px] h-[252px] w-[8px] rounded-[4px] bg-[#474747]" />
                        <span className="absolute bottom-[3px] right-[3px] h-0 w-0 border-x-[4px] border-t-[4px] border-x-transparent border-t-[#3c3c3c]" />
                    </div>
                    <div className="mr-[9px] mt-[6px] flex justify-end">
                        <div className="flex h-[24px] w-[89px] items-center justify-center border border-[#444444] text-[#c4c4c4]">恢复默认设置</div>
                    </div>
                </div>

                <Grip cls="left-[472px] -mt-[168px]" />
                <Grip cls="left-[1648px] -mt-[168px]" right />
            </div>

            {/* status bar */}
            <div className="flex h-[31px] shrink-0 items-center bg-[#383838] pl-[2px] tracking-[0.3px] text-[#e0e0e0]">
                <span className="w-[203px] whitespace-nowrap [word-spacing:2px]">X = 10496 Y = 14071 Z = -50</span>
                <span className="w-[82px] whitespace-nowrap">层高： 3</span>
                <span className="w-[134px] whitespace-nowrap">标高: -0.05~2.95</span>
                <span className="w-[103px] whitespace-nowrap">2(12)</span>
                <span className="w-[80px] whitespace-nowrap">隐藏： 0</span>
                <div className="flex h-[24px] w-[23px] items-center justify-center border border-[#2f2f2f]">
                    <svg width="12" height="14" viewBox="0 0 12 14" fill="none" stroke="#d8d8d8"><path d="M2 0v13h10M2 8h5v5" /></svg>
                </div>
                <div className="ml-[5px] flex h-[24px] w-[36px] items-center justify-center gap-[3px] border border-[#2f5f8f] bg-[#1f4468]">
                    <svg width="12" height="16" viewBox="0 0 12 16" fill="none"><path d="M1 3h10v12H1z" stroke="#55a8f0" /><rect width="4" height="5" fill="#f0a040" /></svg>
                    <span className="h-0 w-0 border-x-[2px] border-t-[3px] border-x-transparent border-t-[#dddddd]" />
                </div>
                <div className="ml-[3px] flex h-[24px] w-[25px] items-center justify-center border border-[#2f2f2f]">
                    <svg width="14" height="16" viewBox="0 0 14 16" fill="none" stroke="#6d6d6d"><path d="M1 1l12 14M13 1L1 15" /></svg>
                </div>
                <div className="ml-[2px] flex h-[24px] w-[36px] items-center justify-center gap-[4px] border border-[#2f2f2f]">
                    <svg width="14" height="14" viewBox="0 0 14 14" fill="none" stroke="#d8d8d8"><path d="M1 12L10 2M1 12h12M6 7l3 5" /></svg>
                    <span className="h-0 w-0 border-x-[2px] border-t-[3px] border-x-transparent border-t-[#dddddd]" />
                </div>
                <div className="ml-[3px] flex h-[24px] w-[36px] items-center justify-center gap-[4px] border border-[#2f2f2f]">
                    <svg width="15" height="14" viewBox="0 0 15 14" fill="none"><path d="M1 3h6M4 0v6" stroke="#d8d8d8" /><rect x="6" y="8" width="8" height="5" fill="#bbbbbb" /></svg>
                    <span className="h-0 w-0 border-x-[2px] border-t-[3px] border-x-transparent border-t-[#dddddd]" />
                </div>
                <div className="ml-[2px] flex h-[24px] w-[73px] items-center justify-center border border-[#2f2f2f] tracking-normal">跨图层选择</div>
                <div className="ml-[3px] flex h-[24px] w-[60px] items-center justify-center border border-[#2f2f2f] tracking-normal">折线选择</div>
                <span className="ml-[4px] whitespace-nowrap tracking-normal">按鼠标左键指定第一个角点，或拾取构件图元</span>
            </div>

            {/* desktop taskbar peeking out below */}
            <div className="flex h-[9px] shrink-0 flex-col bg-[#26281f]">
                <span className="h-px w-[1840px] bg-white" />
                <div className="flex min-h-0 flex-1">
                    <span className="ml-[10px] w-[30px] rounded-t-[12px] bg-[#7fa9cc]" />
                    <span className="ml-[44px] w-[14px] bg-[#8a8a80]" />
                    <span className="ml-[20px] w-[14px] bg-[#6f8f4f]" />
                    <span className="ml-[42px] w-[159px] bg-white" />
                    <span className="ml-[2px] w-[40px] bg-[#2a86e0]" />
                    <span className="ml-[20px] w-[20px] rounded-t-[8px] bg-[#2a86e0]" />
                    <span className="w-[20px] rounded-t-[8px] bg-[#e0a020]" />
                    {[0, 1, 2, 3, 4, 5].map((i) => (
                        <span key={i} className="ml-[3px] w-[159px] bg-gradient-to-b from-[#d4d4d4] to-[#9a9a9a]" />
                    ))}
                    <span className="ml-auto w-[24px] bg-[#555555]" />
                </div>
            </div>

            {/* net speed widget */}
            <div className="absolute bottom-[12px] right-[2px] flex h-[38px] w-[83px] items-center justify-end rounded-r-[19px] bg-gradient-to-b from-white to-[#d0d0d0] pr-[6px] text-[11px] leading-[15px] text-[#222222]">
                <div className="mr-[6px] flex flex-col items-end">
                    <span>0K/s</span>
                    <span>0.1K/s</span>
                </div>
                <span className="flex h-[16px] w-[16px] items-center justify-center rounded-full bg-[#2f7fe0] text-[14px] font-bold leading-none text-white">+</span>
            </div>
            <div className="absolute bottom-[20px] right-[66px] flex flex-col gap-[5px]">
                <svg width="7" height="8" viewBox="0 0 7 8" fill="#e05030"><path d="M3.5 0L7 4H5v4H2V4H0z" /></svg>
                <svg width="7" height="8" viewBox="0 0 7 8" fill="#2f9f50"><path d="M3.5 8L7 4H5V0H2v4H0z" /></svg>
            </div>
            <div className="absolute bottom-[10px] right-[81px] flex h-[46px] w-[46px] items-center justify-center rounded-full border-2 border-white bg-[linear-gradient(#1f7a4f_0,#1f7a4f_30%,#46c864_30%,#46c864_100%)] text-[15px] text-white shadow-[0_0_0_1px_#999999]">69%</div>
        </div>
    );
}
